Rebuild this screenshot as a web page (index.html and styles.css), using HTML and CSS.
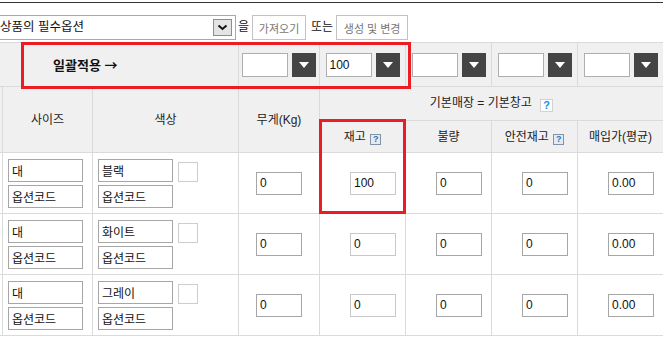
FILE: index.html
```html
<!DOCTYPE html>
<html lang="ko">
<head>
  <meta charset="UTF-8">
  <meta name="viewport" content="width=device-width, initial-scale=1.0">
  <title>필수옵션 설정</title>
  <link rel="stylesheet" href="styles.css">
</head>
<body>
  <div class="page">
    <div class="toolbar">
      <div class="select">
        <span class="select-text">상품의 필수옵션</span>
        <span class="select-arrow">
          <svg width="11" height="7" viewBox="0 0 11 7"><polyline points="1.5,1.5 5.5,5 9.5,1.5" fill="none" stroke="#111" stroke-width="2"/></svg>
        </span>
      </div>
      <span class="word">을</span>
      <button class="btn btn-load">가져오기</button>
      <span class="word word-or">또는</span>
      <button class="btn btn-make">생성 및 변경</button>
    </div>

    <table class="opt-table">
      <colgroup>
        <col class="c-chk">
        <col class="c-size">
        <col class="c-color">
        <col class="c-weight">
        <col class="c-num">
        <col class="c-num">
        <col class="c-num">
        <col class="c-num">
      </colgroup>

      <tr class="bulk-row">
        <td colspan="3" class="bulk-label">일괄적용 →</td>
        <td class="bulk"><input type="text" value=""><button class="drop"><svg width="10" height="6" viewBox="0 0 10 6"><polygon points="0,0 10,0 5,6" fill="#fff"/></svg></button></td>
        <td class="bulk"><input type="text" value="100"><button class="drop"><svg width="10" height="6" viewBox="0 0 10 6"><polygon points="0,0 10,0 5,6" fill="#fff"/></svg></button></td>
        <td class="bulk"><input type="text" value=""><button class="drop"><svg width="10" height="6" viewBox="0 0 10 6"><polygon points="0,0 10,0 5,6" fill="#fff"/></svg></button></td>
        <td class="bulk"><input type="text" value=""><button class="drop"><svg width="10" height="6" viewBox="0 0 10 6"><polygon points="0,0 10,0 5,6" fill="#fff"/></svg></button></td>
        <td class="bulk"><input type="text" value=""><button class="drop"><svg width="10" height="6" viewBox="0 0 10 6"><polygon points="0,0 10,0 5,6" fill="#fff"/></svg></button></td>
      </tr>

      <tr class="head-row">
        <th rowspan="2"></th>
        <th rowspan="2">사이즈</th>
        <th rowspan="2">색상</th>
        <th rowspan="2">무게(Kg)</th>
        <th colspan="4">기본매장 = 기본창고 <span class="help help-big">?</span></th>
      </tr>
      <tr class="sub-row">
        <th>재고 <span class="help">?</span></th>
        <th>불량</th>
        <th>안전재고 <span class="help">?</span></th>
        <th>매입가(평균)</th>
      </tr>

      <tr class="data-row">
        <td></td>
        <td class="size">
          <div class="stack"><input type="text" value="대"><input type="text" value="옵션코드"></div>
        </td>
        <td class="color">
          <div class="color-box">
            <div class="stack"><input type="text" value="블랙"><input type="text" value="옵션코드"></div>
            <span class="swatch"></span>
          </div>
        </td>
        <td class="weight"><input type="text" value="0"></td>
        <td class="num stock"><input type="text" value="100"></td>
        <td class="num"><input type="text" value="0"></td>
        <td class="num"><input type="text" value="0"></td>
        <td class="num"><input type="text" value="0.00"></td>
      </tr>
      <tr class="data-row">
        <td></td>
        <td class="size">
          <div class="stack"><input type="text" value="대"><input type="text" value="옵션코드"></div>
        </td>
        <td class="color">
          <div class="color-box">
            <div class="stack"><input type="text" value="화이트"><input type="text" value="옵션코드"></div>
            <span class="swatch"></span>
          </div>
        </td>
        <td class="weight"><input type="text" value="0"></td>
        <td class="num stock"><input type="text" value="0"></td>
        <td class="num"><input type="text" value="0"></td>
        <td class="num"><input type="text" value="0"></td>
        <td class="num"><input type="text" value="0.00"></td>
      </tr>
      <tr class="data-row">
        <td></td>
        <td class="size">
          <div class="stack"><input type="text" value="대"><input type="text" value="옵션코드"></div>
        </td>
        <td class="color">
          <div class="color-box">
            <div class="stack"><input type="text" value="그레이"><input type="text" value="옵션코드"></div>
            <span class="swatch"></span>
          </div>
        </td>
        <td class="weight"><input type="text" value="0"></td>
        <td class="num stock"><input type="text" value="0"></td>
        <td class="num"><input type="text" value="0"></td>
        <td class="num"><input type="text" value="0"></td>
        <td class="num"><input type="text" value="0.00"></td>
      </tr>
    </table>
  </div>

  <!-- highlight boxes drawn over the table -->
  <div class="mark mark-bulk"></div>
  <div class="mark mark-stock"></div>
</body>
</html>
```

FILE: styles.css
```css
html, body {
  margin: 0;
  padding: 0;
  overflow: hidden;
  background: #fff;
}
body {
  font-family: "Liberation Sans", "Noto Sans CJK KR", sans-serif;
  font-size: 12px;
  color: #222;
  padding-top: 2px;
}
input, button {
  font-family: "Liberation Sans", "Noto Sans CJK KR", sans-serif;
}
.page {
  margin-left: -20px;
  width: 720px;
  border-top: 1px solid #333;
}
.toolbar {
  height: 39px;
  box-sizing: border-box;
  padding: 10px 0 0 16px;
  display: flex;
  align-items: center;
}
.toolbar > * {
  flex: none;
}
.select {
  width: 240px;
  height: 25px;
  box-sizing: border-box;
  border: 1px solid #a9a9a9;
  display: flex;
  align-items: center;
  justify-content: space-between;
  padding: 0 3px 0 3px;
  font-size: 12px;
  color: #111;
  line-height: 23px;
}
.select-text {
  font-size: 12.5px;
}
.select-arrow {
  width: 19px;
  height: 17px;
  box-sizing: border-box;
  border: 1px solid #8d8d8d;
  background: #e4e4e4;
  display: flex;
  align-items: center;
  justify-content: center;
}
.word {
  margin: 0 3px 0 2px;
  color: #111;
  line-height: 25px;
}
.word-or {
  margin: 0 3px 0 5px;
}
.btn {
  height: 25px;
  box-sizing: border-box;
  border: 1px solid #c2c2c2;
  background: #fff;
  color: #777;
  font-size: 11px;
  padding: 0;
  text-align: center;
}
.btn-load {
  width: 54px;
}
.btn-make {
  width: 72px;
}

.opt-table {
  border-collapse: collapse;
  table-layout: fixed;
  width: 684px;
}
.c-chk { width: 22px; }
.c-size { width: 90px; }
.c-color { width: 146px; }
.c-weight { width: 81px; }
.c-num { width: 86px; }
.opt-table td, .opt-table th {
  border: 1px solid #dadada;
  padding: 0;
  font-size: 12px;
  font-weight: normal;
  color: #222;
  line-height: 16px;
}
.opt-table input {
  height: 23px;
  box-sizing: border-box;
  border: 1px solid #a6a6a6;
  padding: 0 3px;
  font-size: 12px;
  color: #111;
  outline: none;
  margin: 0;
}

.bulk-row td {
  background: #f0f0f0;
  height: 43px;
}
.opt-table .bulk-label {
  font-family: "Noto Sans CJK KR", sans-serif;
  font-size: 13px;
  font-weight: bold;
  color: #111;
  padding-left: 72px;
}
.bulk {
  text-align: center;
  white-space: nowrap;
  font-size: 0;
}
.opt-table .bulk input {
  width: 46px;
  height: 24px;
  vertical-align: middle;
  border-color: #aeaeae;
}
.drop {
  width: 24px;
  height: 24px;
  border: 0;
  margin-left: 4px;
  padding: 0;
  background: #444;
  vertical-align: middle;
  display: inline-flex;
  align-items: center;
  justify-content: center;
}

.head-row th, .sub-row th {
  background: #f0f0f0;
  text-align: center;
}
.head-row th {
  height: 33px;
}
.sub-row th {
  height: 31px;
}
.help {
  display: inline-block;
  width: 9px;
  height: 9px;
  line-height: 9px;
  border: 1px solid #8393a5;
  background: #e2ebf4;
  color: #2b72ba;
  font-size: 9px;
  font-weight: bold;
  text-align: center;
  vertical-align: -1px;
  margin-left: 1px;
}
.help-big {
  width: 11px;
  height: 11px;
  line-height: 11px;
  border-color: #d2d2d2;
  background: #fff;
  color: #1b8fd9;
  font-size: 11px;
  margin-left: 5px;
  vertical-align: -2px;
}

.data-row td {
  height: 60px;
  background: #fff;
}
.stack {
  display: flex;
  flex-direction: column;
  gap: 3px;
}
.stack input {
  width: 75px;
}
.opt-table .size, .opt-table .color {
  padding-left: 5px;
}
.color-box {
  display: flex;
  align-items: flex-start;
}
.swatch {
  width: 20px;
  height: 20px;
  box-sizing: border-box;
  border: 1px solid #cdcdcd;
  margin: 3px 0 0 5px;
}
.weight {
  text-align: center;
}
.weight input, .num input {
  width: 46px;
}
.opt-table .num {
  padding-left: 30px;
}
.opt-table .stock input {
  border-color: #c8c8c8;
}

.mark {
  position: absolute;
  box-sizing: border-box;
  border: 3px solid #ec1c24;
}
.mark-bulk {
  left: 21px;
  top: 42px;
  width: 390px;
  height: 47px;
}
.mark-stock {
  left: 319px;
  top: 119px;
  width: 87px;
  height: 95px;
}
```
